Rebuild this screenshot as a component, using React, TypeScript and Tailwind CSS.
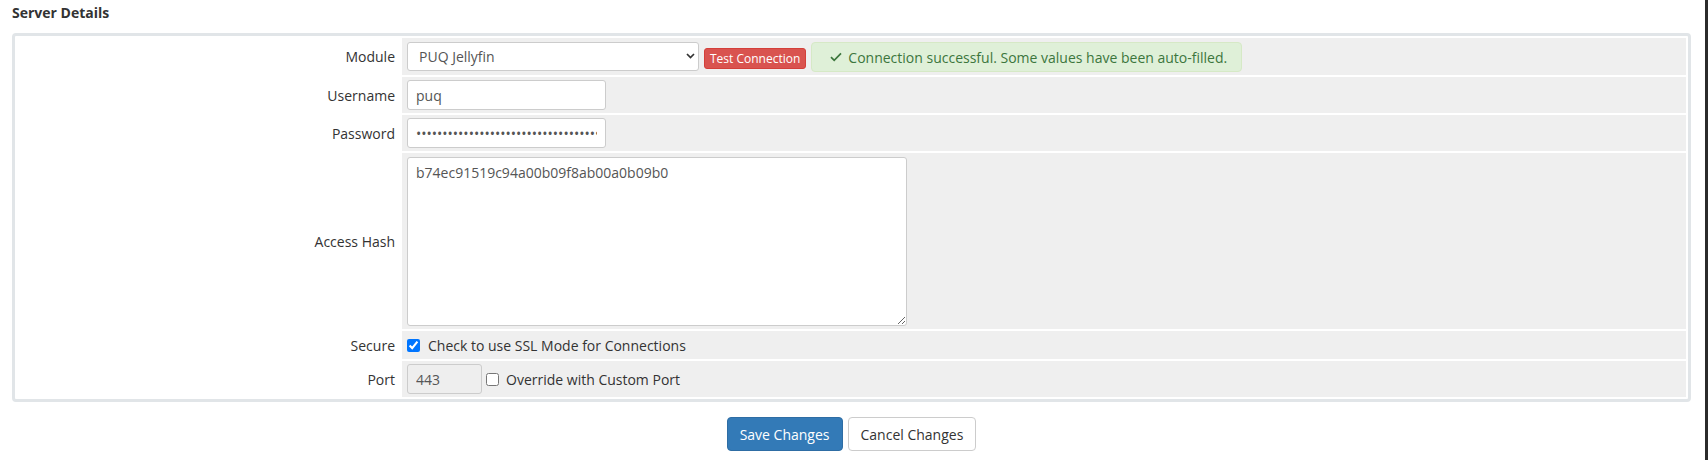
import React from "react";

function Label({ children }: { children: React.ReactNode }) {
  return (
    <div className="flex items-center justify-end pr-[5px] text-[14px] text-[#333333] bg-white">
      {children}
    </div>
  );
}

export default function App() {
  const pw = "abcdefghijklmnopqrstuvwxyzabcdefghijklmnop";
  return (
    <div className="w-[1708px] h-[460px] flex bg-white font-['Open_Sans',sans-serif] text-[#333333] overflow-hidden">
      <div className="flex-1 pl-[12px] pr-[14px] pt-[3px]">
        <div className="text-[14px] leading-[20px] font-bold text-[#333333]">Server Details</div>
        <div className="mt-[10px] border-[3px] border-[#e1e5e8] rounded-[4px] p-[2px] grid grid-cols-[383px_1fr] gap-[2px]">
          {/* Module */}
          <Label>Module</Label>
          <div className="h-[37px] bg-[#efefef] pl-[5px] flex items-start">
            <div className="relative mt-[4px] w-[292px] h-[29px]">
              <select
                defaultValue="puq"
                className="appearance-none w-full h-full bg-white border border-[#cccccc] rounded-[3px] pl-[11px] pr-[20px] text-[14px] text-[#555555] font-['Open_Sans',sans-serif] outline-none"
              >
                <option value="puq">PUQ Jellyfin</option>
              </select>
              <svg
                className="absolute right-[4px] top-[11px] pointer-events-none"
                width="9"
                height="6"
                viewBox="0 0 9 6"
              >
                <path d="M1 1 L4.5 4.5 L8 1" fill="none" stroke="#333" strokeWidth="1.7" />
              </svg>
            </div>
            <button className="ml-[5px] mt-[10px] h-[21px] px-[5px] bg-[#d9534f] border border-[#d43f3a] rounded-[3px] text-white text-[12px] leading-[19px] font-['Open_Sans',sans-serif]">
              Test Connection
            </button>
            <div className="ml-[5px] mt-[4px] h-[30px] pl-[18px] pr-[14px] flex items-center bg-[#dff0d8] border border-[#d6e9c6] rounded-[4px] text-[#3c763d] text-[14px]">
              <svg width="12" height="10" viewBox="0 0 12 10" className="mr-[6px]">
                <path d="M1 5.2 L4.2 8.4 L11 1.4" fill="none" stroke="#3c763d" strokeWidth="1.7" />
              </svg>
              <span>Connection successful. Some values have been auto-filled.</span>
            </div>
          </div>

          {/* Username */}
          <Label>Username</Label>
          <div className="h-[36px] bg-[#efefef] pl-[5px] flex items-center">
            <input
              type="text"
              defaultValue="puq"
              className="w-[199px] h-[30px] bg-white border border-[#cccccc] rounded-[3px] px-[8px] text-[14px] text-[#555555] outline-none font-['Open_Sans',sans-serif]"
            />
          </div>

          {/* Password */}
          <Label>Password</Label>
          <div className="h-[36px] bg-[#efefef] pl-[5px] flex items-center">
            <input
              type="password"
              defaultValue={pw}
              className="w-[199px] h-[30px] bg-white border border-[#cccccc] rounded-[3px] px-[8px] text-[14px] text-[#555555] outline-none font-['Open_Sans',sans-serif]"
            />
          </div>

          {/* Access Hash */}
          <Label>Access Hash</Label>
          <div className="h-[176px] bg-[#efefef] pl-[5px] flex items-center">
            <textarea
              defaultValue="b74ec91519c94a00b09f8ab00a0b09b0"
              className="w-[500px] h-[169px] bg-white border border-[#cccccc] rounded-[3px] px-[8px] py-[5px] text-[14px] leading-[20px] text-[#555555] outline-none font-['Open_Sans',sans-serif]"
            />
          </div>

          {/* Secure */}
          <Label>Secure</Label>
          <div className="h-[28px] bg-[#efefef] pl-[5px] flex items-center text-[14px] text-[#333333]">
            <input type="checkbox" defaultChecked className="m-0 w-[13px] h-[13px]" />
            <span className="ml-[8px]">Check to use SSL Mode for Connections</span>
          </div>

          {/* Port */}
          <Label>Port</Label>
          <div className="h-[36px] bg-[#efefef] pl-[5px] flex items-center text-[14px] text-[#333333]">
            <input
              type="text"
              disabled
              defaultValue="443"
              className="w-[75px] h-[30px] bg-[#eeeeee] border border-[#cccccc] rounded-[3px] px-[8px] text-[14px] text-[#555555] font-['Open_Sans',sans-serif]"
            />
            <input type="checkbox" className="ml-[4px] m-0 w-[13px] h-[13px]" />
            <span className="ml-[7px]">Override with Custom Port</span>
          </div>
        </div>

        <div className="mt-[15px] flex justify-center gap-[5px]">
          <button className="h-[34px] px-[12px] bg-[#337ab7] border border-[#2e6da4] rounded-[4px] text-white text-[14px] font-['Open_Sans',sans-serif]">
            Save Changes
          </button>
          <button className="h-[34px] px-[12px] bg-white border border-[#cccccc] rounded-[4px] text-[#333333] text-[14px] font-['Open_Sans',sans-serif]">
            Cancel Changes
          </button>
        </div>
      </div>
      <div className="w-[3px] h-full bg-[#2b2b2b]" />
    </div>
  );
}
